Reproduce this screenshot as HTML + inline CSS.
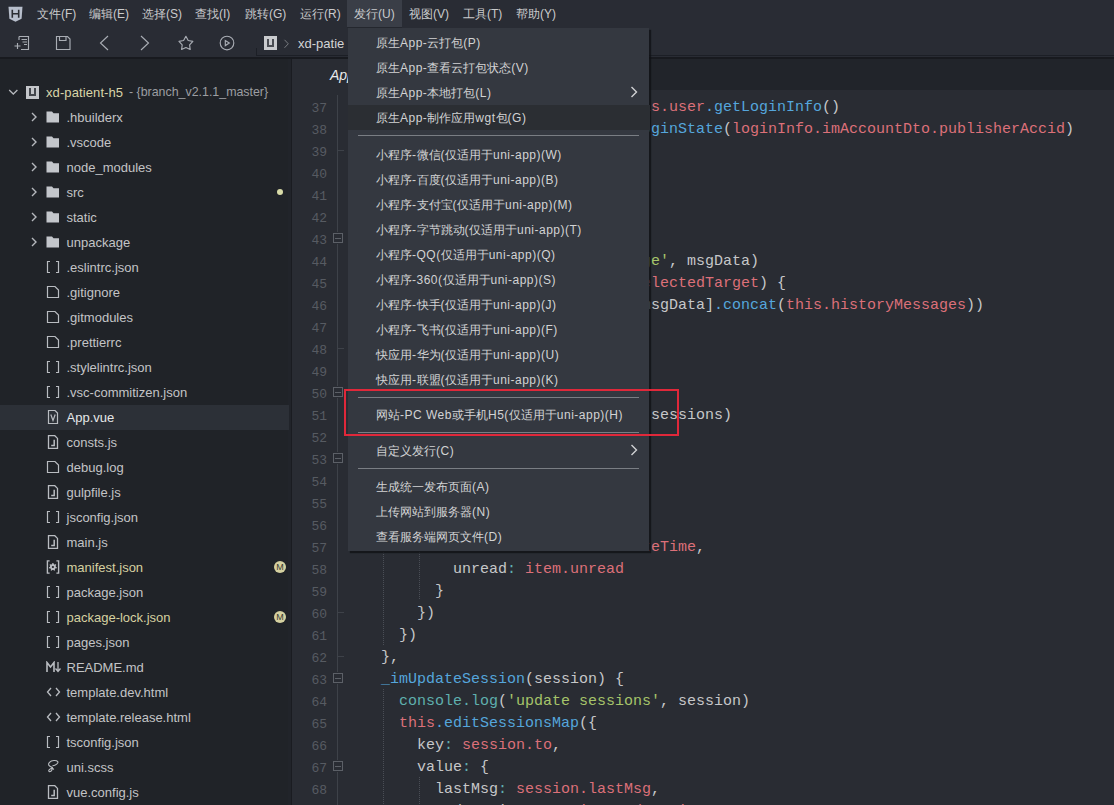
<!DOCTYPE html>
<html><head><meta charset="utf-8">
<style>
*{margin:0;padding:0;box-sizing:border-box}
html,body{width:1114px;height:805px;overflow:hidden;background:#23262b;font-family:"Liberation Sans",sans-serif}
.abs{position:absolute}
#top{left:0;top:0;width:1114px;height:57px;background:#292c34}
#sep{left:0;top:57px;width:1114px;height:2px;background:#181a1f}
.mi{position:absolute;top:6px;font-size:12px;color:#c9cacc;white-space:nowrap;line-height:16px}
#side{left:0;top:59px;width:291px;height:747px;background:#202328}
#sideb{left:288px;top:59px;width:4px;height:747px;background:linear-gradient(to right,#21242a 0,#21242a 3px,#1a1c21 3px)}
#tabbar{left:292px;top:59px;width:822px;height:31px;background:#21242a}
#editor{left:292px;top:90px;width:822px;height:715px;background:#292c33}
.row{position:absolute;left:0;width:291px;height:25px;font-size:13px;line-height:25px;color:#c3c4c6;white-space:nowrap}
.row .t{position:absolute;left:67px;top:0}
.ln{position:absolute;left:293px;width:34px;text-align:right;font-family:"Liberation Mono",monospace;font-size:13px;color:#575b62;line-height:22px}
.code{position:absolute;font-family:"Liberation Mono",monospace;font-size:15px;line-height:22px;white-space:pre;color:#c9cacb}
.k{color:#e06c75}.f{color:#56a8d8}.s{color:#a5c25c}.p{color:#c9cacb}.r{color:#d95c5c}
#menu{left:348px;top:28px;width:301px;height:523px;background:#343840;box-shadow:2px 2px 1px rgba(15,16,20,.75)}
.it{position:absolute;left:28px;margin-top:1px;font-size:12px;color:#d2d3d4;white-space:nowrap;line-height:25px;height:25px}
.ig{position:absolute;width:1px;background:repeating-linear-gradient(to bottom,#4a4e56 0,#4a4e56 1px,transparent 1px,transparent 2px)}
.l{letter-spacing:0.5px}
.msep{position:absolute;left:10px;width:281px;height:1px;background:#7a7e84}
</style></head><body>
<div id="top" class="abs"></div>
<div id="sep" class="abs"></div>
<!-- menubar -->
<svg class="abs" style="left:8px;top:6px" width="15" height="16.5" viewBox="0 0 15 16"><path d="M0.5 0.5H14.5L13.6 12.5L7.5 15.5L1.4 12.5Z" fill="#b8bfcc"/><path d="M4.3 3.5V11.5M10.7 3.5V11.5M4.3 7.5H10.7" stroke="#2a2d32" stroke-width="1.6" fill="none"/></svg>
<div class="mi" style="left:37px">文件(F)</div>
<div class="mi" style="left:89px">编辑(E)</div>
<div class="mi" style="left:142px">选择(S)</div>
<div class="mi" style="left:195px">查找(I)</div>
<div class="mi" style="left:245px">跳转(G)</div>
<div class="mi" style="left:300px">运行(R)</div>
<div class="abs" style="left:347px;top:0;width:55px;height:27px;background:#3a3e47"></div><div class="abs" style="left:347px;top:27px;width:55px;height:1px;background:#24272e"></div>
<div class="mi" style="left:354px">发行(U)</div>
<div class="mi" style="left:409px">视图(V)</div>
<div class="mi" style="left:463px">工具(T)</div>
<div class="mi" style="left:516px">帮助(Y)</div>

<!-- toolbar icons -->
<svg class="abs" style="left:0;top:28px" width="300" height="27" viewBox="0 28 300 27" fill="none" stroke="#a9adb4" stroke-width="1.15">
 <path d="M19 36.5H28.5V49.5H21"/><path d="M19 36.5V40"/><path d="M21.5 39.5H27M22.5 42H27M24 44.5H27"/><path d="M14.5 46H20.5M17.5 43V49"/>
 <path d="M56.5 36.5H67.5L70 39V49.5H56.5Z"/><path d="M59.5 36.5V40.5H66V36.5"/>
 <path d="M108 36L100.5 43L108 50"/>
 <path d="M141 36L148.5 43L141 50"/>
 <path d="M185.90 36.30L188.19 40.44L192.84 41.34L189.61 44.81L190.19 49.51L185.90 47.50L181.61 49.51L182.19 44.81L178.96 41.34L183.61 40.44Z" stroke-linejoin="round"/>
 <circle cx="227" cy="43" r="6.8"/><path d="M225.3 40.6V45.6L229.3 43.1Z"/>
 <path d="M284.5 39.8L288.3 43.8L284.5 47.8" stroke="#7a7d82" stroke-width="1"/>
</svg>
<div class="abs" style="left:264px;top:36px;width:13px;height:14px;background:#c9cbce"></div>
<div class="abs" style="left:267px;top:39px;width:7px;height:8px;border:2px solid #4a4d53;border-top:none"></div>
<div class="abs" style="left:256px;top:48px;width:858px;height:8px;border-left:1px solid #1c1f26;border-bottom:1px solid #1c1f26"></div>
<div class="mi" style="left:298px;top:36px;font-size:13px;color:#d3d4d6">xd-patie</div>

<div id="side" class="abs"></div>
<div id="sideb" class="abs"></div>
<div id="tabbar" class="abs"></div>
<div id="editor" class="abs"></div>

<div class="abs" style="left:292px;top:59px;width:300px;height:31px;background:#292c33"></div>
<div class="abs" style="left:330px;top:66px;font-size:14px;font-style:italic;color:#e8e9ea;line-height:18px">App.vue</div>
<svg class="abs" style="left:8px;top:89px" width="11" height="7" viewBox="0 0 11 7"><path d="M1.2 1L5.3 5L9.4 1" stroke="#b5b8bd" stroke-width="1.3" fill="none"/></svg>
<div class="abs" style="left:26px;top:86px;width:13px;height:13px;background:#c4c6ca"></div>
<div class="abs" style="left:29px;top:88px;width:7px;height:8px;border:2px solid #44474d;border-top:none"></div>
<div class="row" style="top:80px"><span class="t" style="left:46px;letter-spacing:0.1px;color:#d9d5a9">xd-patient-h5</span><span class="t" style="left:129px;font-size:12.4px;color:#9c9ea2">- {branch_v2.1.1_master}</span></div>
<svg class="abs" style="left:30.5px;top:112px" width="7" height="10" viewBox="0 0 7 10"><path d="M1 1L5 5L1 9" stroke="#b5b8bd" stroke-width="1.4" fill="none"/></svg><svg class="abs" style="left:46px;top:111px" width="14" height="12" viewBox="0 0 14 12"><path d="M0.5 0.5H6L7.5 2.2H13V11.5H0.5Z" fill="#c3c6cb"/></svg>
<div class="row" style="top:105px"><span class="t" style="left:66.5px;color:#c3c4c6">.hbuilderx</span></div>
<svg class="abs" style="left:30.5px;top:137px" width="7" height="10" viewBox="0 0 7 10"><path d="M1 1L5 5L1 9" stroke="#b5b8bd" stroke-width="1.4" fill="none"/></svg><svg class="abs" style="left:46px;top:136px" width="14" height="12" viewBox="0 0 14 12"><path d="M0.5 0.5H6L7.5 2.2H13V11.5H0.5Z" fill="#c3c6cb"/></svg>
<div class="row" style="top:130px"><span class="t" style="left:66.5px;color:#c3c4c6">.vscode</span></div>
<svg class="abs" style="left:30.5px;top:162px" width="7" height="10" viewBox="0 0 7 10"><path d="M1 1L5 5L1 9" stroke="#b5b8bd" stroke-width="1.4" fill="none"/></svg><svg class="abs" style="left:46px;top:161px" width="14" height="12" viewBox="0 0 14 12"><path d="M0.5 0.5H6L7.5 2.2H13V11.5H0.5Z" fill="#c3c6cb"/></svg>
<div class="row" style="top:155px"><span class="t" style="left:66.5px;color:#c3c4c6">node_modules</span></div>
<svg class="abs" style="left:30.5px;top:187px" width="7" height="10" viewBox="0 0 7 10"><path d="M1 1L5 5L1 9" stroke="#b5b8bd" stroke-width="1.4" fill="none"/></svg><svg class="abs" style="left:46px;top:186px" width="14" height="12" viewBox="0 0 14 12"><path d="M0.5 0.5H6L7.5 2.2H13V11.5H0.5Z" fill="#c3c6cb"/></svg>
<div class="row" style="top:180px"><span class="t" style="left:66.5px;color:#c3c4c6">src</span></div>
<div class="abs" style="left:277px;top:189px;width:6px;height:6px;border-radius:50%;background:#d8dba8"></div>
<svg class="abs" style="left:30.5px;top:212px" width="7" height="10" viewBox="0 0 7 10"><path d="M1 1L5 5L1 9" stroke="#b5b8bd" stroke-width="1.4" fill="none"/></svg><svg class="abs" style="left:46px;top:211px" width="14" height="12" viewBox="0 0 14 12"><path d="M0.5 0.5H6L7.5 2.2H13V11.5H0.5Z" fill="#c3c6cb"/></svg>
<div class="row" style="top:205px"><span class="t" style="left:66.5px;color:#c3c4c6">static</span></div>
<svg class="abs" style="left:30.5px;top:237px" width="7" height="10" viewBox="0 0 7 10"><path d="M1 1L5 5L1 9" stroke="#b5b8bd" stroke-width="1.4" fill="none"/></svg><svg class="abs" style="left:46px;top:236px" width="14" height="12" viewBox="0 0 14 12"><path d="M0.5 0.5H6L7.5 2.2H13V11.5H0.5Z" fill="#c3c6cb"/></svg>
<div class="row" style="top:230px"><span class="t" style="left:66.5px;color:#c3c4c6">unpackage</span></div>
<svg class="abs" style="left:46px;top:260px" width="14" height="14" viewBox="0 0 14 14" fill="none" stroke="#b9bcc1" stroke-width="1.2"><path d="M4 1.5H1.5V12.5H4M10 1.5H12.5V12.5H10"/></svg>
<div class="row" style="top:255px"><span class="t" style="left:66.5px;color:#c3c4c6">.eslintrc.json</span></div>
<svg class="abs" style="left:46px;top:285px" width="14" height="14" viewBox="0 0 14 14" fill="none" stroke="#b9bcc1" stroke-width="1.2"><path d="M1.5 1.5H9L12.5 5V12.5H1.5Z"/></svg>
<div class="row" style="top:280px"><span class="t" style="left:66.5px;color:#c3c4c6">.gitignore</span></div>
<svg class="abs" style="left:46px;top:310px" width="14" height="14" viewBox="0 0 14 14" fill="none" stroke="#b9bcc1" stroke-width="1.2"><path d="M1.5 1.5H9L12.5 5V12.5H1.5Z"/></svg>
<div class="row" style="top:305px"><span class="t" style="left:66.5px;color:#c3c4c6">.gitmodules</span></div>
<svg class="abs" style="left:46px;top:335px" width="14" height="14" viewBox="0 0 14 14" fill="none" stroke="#b9bcc1" stroke-width="1.2"><path d="M1.5 1.5H9L12.5 5V12.5H1.5Z"/></svg>
<div class="row" style="top:330px"><span class="t" style="left:66.5px;color:#c3c4c6">.prettierrc</span></div>
<svg class="abs" style="left:46px;top:360px" width="14" height="14" viewBox="0 0 14 14" fill="none" stroke="#b9bcc1" stroke-width="1.2"><path d="M4 1.5H1.5V12.5H4M10 1.5H12.5V12.5H10"/></svg>
<div class="row" style="top:355px"><span class="t" style="left:66.5px;color:#c3c4c6">.stylelintrc.json</span></div>
<svg class="abs" style="left:46px;top:385px" width="14" height="14" viewBox="0 0 14 14" fill="none" stroke="#b9bcc1" stroke-width="1.2"><path d="M4 1.5H1.5V12.5H4M10 1.5H12.5V12.5H10"/></svg>
<div class="row" style="top:380px"><span class="t" style="left:66.5px;color:#c3c4c6">.vsc-commitizen.json</span></div>
<div class="abs" style="left:0;top:405px;width:289px;height:25px;background:#2c3037"></div>
<svg class="abs" style="left:46px;top:410px" width="14" height="14" viewBox="0 0 14 14" fill="none" stroke="#b9bcc1" stroke-width="1.2"><path d="M2.5 0.5H9L11.5 3V13.5H2.5Z"/><path d="M4.8 4.5L7 10.5L9.2 4.5"/></svg>
<div class="row" style="top:405px"><span class="t" style="left:66.5px;color:#e6e7e9">App.vue</span></div>
<svg class="abs" style="left:46px;top:435px" width="14" height="14" viewBox="0 0 14 14" fill="none" stroke="#b9bcc1" stroke-width="1.3"><path d="M2.5 0.7H8.8L11.5 3.4V13.3H2.5Z"/><path d="M8.2 4.8V10.6H5.2" stroke-width="1.5"/></svg>
<div class="row" style="top:430px"><span class="t" style="left:66.5px;color:#c3c4c6">consts.js</span></div>
<svg class="abs" style="left:46px;top:460px" width="14" height="14" viewBox="0 0 14 14" fill="none" stroke="#b9bcc1" stroke-width="1.2"><path d="M1.5 1.5H9L12.5 5V12.5H1.5Z"/></svg>
<div class="row" style="top:455px"><span class="t" style="left:66.5px;color:#c3c4c6">debug.log</span></div>
<svg class="abs" style="left:46px;top:485px" width="14" height="14" viewBox="0 0 14 14" fill="none" stroke="#b9bcc1" stroke-width="1.3"><path d="M2.5 0.7H8.8L11.5 3.4V13.3H2.5Z"/><path d="M8.2 4.8V10.6H5.2" stroke-width="1.5"/></svg>
<div class="row" style="top:480px"><span class="t" style="left:66.5px;color:#c3c4c6">gulpfile.js</span></div>
<svg class="abs" style="left:46px;top:510px" width="14" height="14" viewBox="0 0 14 14" fill="none" stroke="#b9bcc1" stroke-width="1.2"><path d="M4 1.5H1.5V12.5H4M10 1.5H12.5V12.5H10"/></svg>
<div class="row" style="top:505px"><span class="t" style="left:66.5px;color:#c3c4c6">jsconfig.json</span></div>
<svg class="abs" style="left:46px;top:535px" width="14" height="14" viewBox="0 0 14 14" fill="none" stroke="#b9bcc1" stroke-width="1.3"><path d="M2.5 0.7H8.8L11.5 3.4V13.3H2.5Z"/><path d="M8.2 4.8V10.6H5.2" stroke-width="1.5"/></svg>
<div class="row" style="top:530px"><span class="t" style="left:66.5px;color:#c3c4c6">main.js</span></div>
<svg class="abs" style="left:46px;top:560px" width="15" height="14" viewBox="0 0 15 14" fill="none" stroke="#b9bcc1" stroke-width="1.4"><path d="M3.6 0.9H1.4V13.1H3.6M10.4 0.9H12.6V13.1H10.4"/><path d="M5.60 4.30L6.23 4.08L6.26 3.05L7.54 3.05L7.57 4.08L8.20 4.30L8.77 4.65L9.59 4.04L10.39 5.04L9.60 5.70L9.82 6.33L9.90 7.00L10.89 7.25L10.61 8.51L9.60 8.30L9.25 8.87L8.77 9.35L9.19 10.28L8.03 10.84L7.57 9.92L6.90 10.00L6.23 9.92L5.77 10.84L4.61 10.28L5.03 9.35L4.55 8.87L4.20 8.30L3.19 8.51L2.91 7.25L3.90 7.00L3.98 6.33L4.20 5.70L3.41 5.04L4.21 4.04L5.03 4.65Z" fill="#b9bcc1" stroke="none"/><circle cx="6.9" cy="7" r="1.1" fill="#202328" stroke="none"/></svg>
<div class="row" style="top:555px"><span class="t" style="left:66.5px;color:#d6d1a0">manifest.json</span></div>
<div class="abs" style="left:274px;top:561px;width:12px;height:12px;border-radius:50%;background:#d4d0a0;color:#3a3a30;font-size:9px;line-height:12px;text-align:center">M</div>
<svg class="abs" style="left:46px;top:585px" width="14" height="14" viewBox="0 0 14 14" fill="none" stroke="#b9bcc1" stroke-width="1.2"><path d="M4 1.5H1.5V12.5H4M10 1.5H12.5V12.5H10"/></svg>
<div class="row" style="top:580px"><span class="t" style="left:66.5px;color:#c3c4c6">package.json</span></div>
<svg class="abs" style="left:46px;top:610px" width="14" height="14" viewBox="0 0 14 14" fill="none" stroke="#b9bcc1" stroke-width="1.2"><path d="M4 1.5H1.5V12.5H4M10 1.5H12.5V12.5H10"/></svg>
<div class="row" style="top:605px"><span class="t" style="left:66.5px;color:#d6d1a0">package-lock.json</span></div>
<div class="abs" style="left:274px;top:611px;width:12px;height:12px;border-radius:50%;background:#d4d0a0;color:#3a3a30;font-size:9px;line-height:12px;text-align:center">M</div>
<svg class="abs" style="left:46px;top:635px" width="14" height="14" viewBox="0 0 14 14" fill="none" stroke="#b9bcc1" stroke-width="1.2"><path d="M4 1.5H1.5V12.5H4M10 1.5H12.5V12.5H10"/></svg>
<div class="row" style="top:630px"><span class="t" style="left:66.5px;color:#c3c4c6">pages.json</span></div>
<svg class="abs" style="left:46px;top:661px" width="16" height="12" viewBox="0 0 16 12" fill="none" stroke="#b9bcc1" stroke-width="1.6"><path d="M1 11V1.5L4.5 6L8 1.5V11"/><path d="M12 1V10M9.5 7.5L12 10.5L14.5 7.5" stroke-width="1.3"/></svg>
<div class="row" style="top:655px"><span class="t" style="left:66.5px;color:#c3c4c6">README.md</span></div>
<svg class="abs" style="left:46px;top:686px" width="16" height="12" viewBox="0 0 16 12" fill="none" stroke="#b9bcc1" stroke-width="1.3"><path d="M5 2L1.5 6L5 10M10 2L13.5 6L10 10"/></svg>
<div class="row" style="top:680px"><span class="t" style="left:66.5px;color:#c3c4c6">template.dev.html</span></div>
<svg class="abs" style="left:46px;top:711px" width="16" height="12" viewBox="0 0 16 12" fill="none" stroke="#b9bcc1" stroke-width="1.3"><path d="M5 2L1.5 6L5 10M10 2L13.5 6L10 10"/></svg>
<div class="row" style="top:705px"><span class="t" style="left:66.5px;color:#c3c4c6">template.release.html</span></div>
<svg class="abs" style="left:46px;top:735px" width="14" height="14" viewBox="0 0 14 14" fill="none" stroke="#b9bcc1" stroke-width="1.2"><path d="M4 1.5H1.5V12.5H4M10 1.5H12.5V12.5H10"/></svg>
<div class="row" style="top:730px"><span class="t" style="left:66.5px;color:#c3c4c6">tsconfig.json</span></div>
<svg class="abs" style="left:46px;top:759px" width="14" height="15" viewBox="0 0 14 15" fill="none" stroke="#b9bcc1" stroke-width="1.1" stroke-linecap="round"><path d="M6.5 8.5C3 7.5 1.5 5.5 3.5 3.3C5.5 1.2 10.5 1 11.7 2.6C12.8 4.1 9.5 6.5 6.8 6.8"/><path d="M5.8 8.4C6.8 9.6 5.8 12.6 3.6 12.6C2.2 12.6 2.5 10.6 4.5 9.7C5.8 9.1 7.2 9.2 7.6 10.2"/></svg>
<div class="row" style="top:755px"><span class="t" style="left:66.5px;color:#c3c4c6">uni.scss</span></div>
<svg class="abs" style="left:46px;top:785px" width="14" height="14" viewBox="0 0 14 14" fill="none" stroke="#b9bcc1" stroke-width="1.3"><path d="M2.5 0.7H8.8L11.5 3.4V13.3H2.5Z"/><path d="M8.2 4.8V10.6H5.2" stroke-width="1.5"/></svg>
<div class="row" style="top:780px"><span class="t" style="left:66.5px;color:#c3c4c6">vue.config.js</span></div>
<div class="ln" style="top:98px">37</div>
<div class="code" style="left:642px;top:97px"><span style="color:#dc7079">is.user</span><span style="color:#55a6dc">.getLoginInfo</span><span style="color:#c6c7c9">()</span></div>
<div class="ln" style="top:120px">38</div>
<div class="code" style="left:642px;top:119px"><span style="color:#55a6dc">oginState</span><span style="color:#c6c7c9">(</span><span style="color:#dc7079">loginInfo.imAccountDto.publisherAccid</span><span style="color:#c6c7c9">)</span></div>
<div class="ln" style="top:142px">39</div>
<div class="ln" style="top:164px">40</div>
<div class="ln" style="top:186px">41</div>
<div class="ln" style="top:208px">42</div>
<div class="ln" style="top:230px">43</div>
<div class="ln" style="top:252px">44</div>
<div class="code" style="left:642px;top:251px"><span style="color:#a6c46a">ge&#x27;</span><span style="color:#c6c7c9">, msgData)</span></div>
<div class="ln" style="top:274px">45</div>
<div class="code" style="left:642px;top:273px"><span style="color:#dc7079">electedTarget</span><span style="color:#c6c7c9">) {</span></div>
<div class="ln" style="top:296px">46</div>
<div class="code" style="left:642px;top:295px"><span style="color:#c6c7c9">msgData]</span><span style="color:#55a6dc">.concat</span><span style="color:#c6c7c9">(</span><span style="color:#dc7079">this.historyMessages</span><span style="color:#c6c7c9">))</span></div>
<div class="ln" style="top:318px">47</div>
<div class="ln" style="top:340px">48</div>
<div class="ln" style="top:362px">49</div>
<div class="ln" style="top:384px">50</div>
<div class="ln" style="top:406px">51</div>
<div class="code" style="left:651px;top:405px"><span style="color:#c6c7c9">sessions)</span></div>
<div class="ln" style="top:428px">52</div>
<div class="ln" style="top:450px">53</div>
<div class="ln" style="top:472px">54</div>
<div class="ln" style="top:494px">55</div>
<div class="ln" style="top:516px">56</div>
<div class="ln" style="top:538px">57</div>
<div class="code" style="left:642px;top:537px"><span style="color:#dc7079">teTime</span><span style="color:#c6c7c9">,</span></div>
<div class="ln" style="top:560px">58</div>
<div class="code" style="left:453px;top:559px"><span style="color:#c6c7c9">unread</span><span style="color:#5fb0ae">: </span><span style="color:#dc7079">item.unread</span></div>
<div class="ln" style="top:582px">59</div>
<div class="code" style="left:435px;top:581px"><span style="color:#c6c7c9">}</span></div>
<div class="ln" style="top:604px">60</div>
<div class="code" style="left:417px;top:603px"><span style="color:#c6c7c9">})</span></div>
<div class="ln" style="top:626px">61</div>
<div class="code" style="left:399px;top:625px"><span style="color:#c6c7c9">})</span></div>
<div class="ln" style="top:648px">62</div>
<div class="code" style="left:381px;top:647px"><span style="color:#c6c7c9">},</span></div>
<div class="ln" style="top:670px">63</div>
<div class="code" style="left:381px;top:669px"><span style="color:#55a6dc">_imUpdateSession</span><span style="color:#c6c7c9">(session) {</span></div>
<div class="ln" style="top:692px">64</div>
<div class="code" style="left:399px;top:691px"><span style="color:#5fb0ae">console.log</span><span style="color:#c6c7c9">(</span><span style="color:#a6c46a">&#x27;update sessions&#x27;</span><span style="color:#c6c7c9">, session)</span></div>
<div class="ln" style="top:714px">65</div>
<div class="code" style="left:399px;top:713px"><span style="color:#dc7079">this</span><span style="color:#55a6dc">.editSessionsMap</span><span style="color:#c6c7c9">({</span></div>
<div class="ln" style="top:736px">66</div>
<div class="code" style="left:417px;top:735px"><span style="color:#c6c7c9">key</span><span style="color:#5fb0ae">: </span><span style="color:#dc7079">session.to</span><span style="color:#c6c7c9">,</span></div>
<div class="ln" style="top:758px">67</div>
<div class="code" style="left:417px;top:757px"><span style="color:#c6c7c9">value</span><span style="color:#5fb0ae">: </span><span style="color:#c6c7c9">{</span></div>
<div class="ln" style="top:780px">68</div>
<div class="code" style="left:435px;top:779px"><span style="color:#c6c7c9">lastMsg</span><span style="color:#5fb0ae">: </span><span style="color:#dc7079">session.lastMsg</span><span style="color:#c6c7c9">,</span></div>
<div class="ln" style="top:802px">69</div>
<div class="code" style="left:435px;top:801px"><span style="color:#c6c7c9">updateTime</span><span style="color:#5fb0ae">: </span><span style="color:#dc7079">session.updateTime</span><span style="color:#c6c7c9">,</span></div>
<div class="abs" style="left:333px;top:233px;width:10px;height:10px;border:1px solid #5c6067"></div><div class="abs" style="left:335px;top:238px;width:6px;height:1px;background:#5c6067"></div>
<div class="abs" style="left:333px;top:387px;width:10px;height:10px;border:1px solid #5c6067"></div><div class="abs" style="left:335px;top:392px;width:6px;height:1px;background:#5c6067"></div>
<div class="abs" style="left:333px;top:453px;width:10px;height:10px;border:1px solid #5c6067"></div><div class="abs" style="left:335px;top:458px;width:6px;height:1px;background:#5c6067"></div>
<div class="abs" style="left:333px;top:673px;width:10px;height:10px;border:1px solid #5c6067"></div><div class="abs" style="left:335px;top:678px;width:6px;height:1px;background:#5c6067"></div>
<div class="abs" style="left:333px;top:761px;width:10px;height:10px;border:1px solid #5c6067"></div><div class="abs" style="left:335px;top:766px;width:6px;height:1px;background:#5c6067"></div>
<div class="abs" style="left:337px;top:95px;width:1px;height:137px;background:#3e4249"></div>
<div class="abs" style="left:337px;top:244px;width:1px;height:142px;background:#3e4249"></div>
<div class="abs" style="left:337px;top:398px;width:1px;height:54px;background:#3e4249"></div>
<div class="abs" style="left:337px;top:464px;width:1px;height:208px;background:#3e4249"></div>
<div class="abs" style="left:337px;top:684px;width:1px;height:76px;background:#3e4249"></div>
<div class="abs" style="left:337px;top:772px;width:1px;height:33px;background:#3e4249"></div>
<div class="abs" style="left:338px;top:150px;width:6px;height:1px;background:#3e4249"></div>
<div class="abs" style="left:338px;top:348px;width:6px;height:1px;background:#3e4249"></div>
<div class="abs" style="left:338px;top:612px;width:6px;height:1px;background:#3e4249"></div>
<div class="abs" style="left:338px;top:656px;width:6px;height:1px;background:#3e4249"></div>
<div class="ig" style="left:383px;top:540px;height:105px"></div>
<div class="ig" style="left:419px;top:540px;height:59px"></div>
<div class="ig" style="left:383px;top:689px;height:116px"></div>
<div class="ig" style="left:419px;top:777px;height:28px"></div>

<div id="menu" class="abs">
 <div class="it" style="top:2px">原生<span class="l">App-</span>云打包<span class="l">(P)</span></div>
 <div class="it" style="top:27px">原生<span class="l">App-</span>查看云打包状态<span class="l">(V)</span></div>
 <div class="it" style="top:52px">原生<span class="l">App-</span>本地打包<span class="l">(L)</span></div>
 <svg class="abs" style="left:282px;top:58px" width="8" height="12" viewBox="0 0 8 12"><path d="M1.5 1L6.5 6L1.5 11" stroke="#d0d1d3" stroke-width="1.4" fill="none"/></svg>
 <div class="abs" style="left:0;top:77px;width:302px;height:25px;background:#2b2e33"></div>
 <div class="it" style="top:77px">原生<span class="l">App-</span>制作应用<span class="l">wgt</span>包<span class="l">(G)</span></div>
 <div class="msep" style="top:107px"></div>
 <div class="it" style="top:114px">小程序<span class="l">-</span>微信<span class="l">(</span>仅适用于<span class="l">uni-app)(W)</span></div>
 <div class="it" style="top:139px">小程序<span class="l">-</span>百度<span class="l">(</span>仅适用于<span class="l">uni-app)(B)</span></div>
 <div class="it" style="top:164px">小程序<span class="l">-</span>支付宝<span class="l">(</span>仅适用于<span class="l">uni-app)(M)</span></div>
 <div class="it" style="top:189px">小程序<span class="l">-</span>字节跳动<span class="l">(</span>仅适用于<span class="l">uni-app)(T)</span></div>
 <div class="it" style="top:214px">小程序<span class="l">-QQ(</span>仅适用于<span class="l">uni-app)(Q)</span></div>
 <div class="it" style="top:239px">小程序<span class="l">-360(</span>仅适用于<span class="l">uni-app)(S)</span></div>
 <div class="it" style="top:264px">小程序<span class="l">-</span>快手<span class="l">(</span>仅适用于<span class="l">uni-app)(J)</span></div>
 <div class="it" style="top:289px">小程序<span class="l">-</span>飞书<span class="l">(</span>仅适用于<span class="l">uni-app)(F)</span></div>
 <div class="it" style="top:314px">快应用<span class="l">-</span>华为<span class="l">(</span>仅适用于<span class="l">uni-app)(U)</span></div>
 <div class="it" style="top:339px">快应用<span class="l">-</span>联盟<span class="l">(</span>仅适用于<span class="l">uni-app)(K)</span></div>
 <div class="msep" style="top:369px"></div>
 <div class="it" style="top:374px">网站<span class="l">-PC Web</span>或手机<span class="l">H5(</span>仅适用于<span class="l">uni-app)(H)</span></div>
 <div class="msep" style="top:404px"></div>
 <div class="it" style="top:410px">自定义发行<span class="l">(C)</span></div>
 <svg class="abs" style="left:282px;top:416px" width="8" height="12" viewBox="0 0 8 12"><path d="M1.5 1L6.5 6L1.5 11" stroke="#d0d1d3" stroke-width="1.4" fill="none"/></svg>
 <div class="msep" style="top:440px"></div>
 <div class="it" style="top:446px">生成统一发布页面<span class="l">(A)</span></div>
 <div class="it" style="top:471px">上传网站到服务器<span class="l">(N)</span></div>
 <div class="it" style="top:496px">查看服务端网页文件<span class="l">(D)</span></div>
</div>
<div class="abs" style="left:344px;top:389px;width:335px;height:47px;border:2.5px solid #e0283a"></div>
</body></html>
